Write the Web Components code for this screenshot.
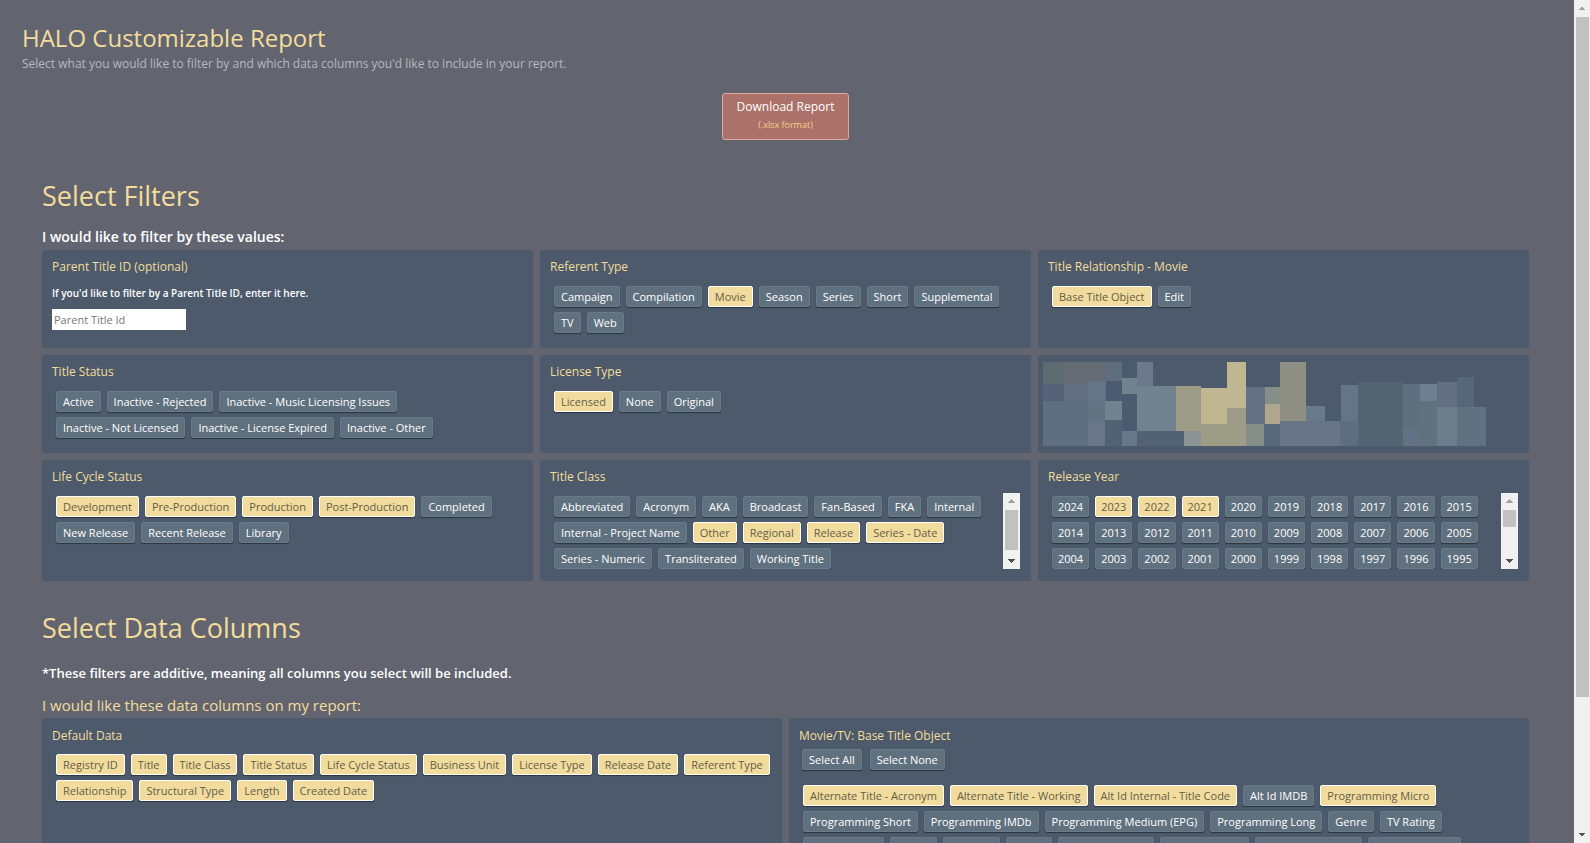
<!DOCTYPE html>
<html lang="en">
<head>
<meta charset="utf-8">
<meta name="viewport" content="width=device-width, initial-scale=1">
<title>HALO Customizable Report</title>
<style>
  html, body { margin: 0; height: 100%; }
  body {
    --page: #626570;
    --panel: #4c5a6c;
    --accent: #f4dd9b;
    --chip: #5f707e;
    background: var(--page);
    color: #fff;
    font-family: "Open Sans", "Noto Sans", sans-serif;
    font-size: 12px;
  }
</style>
</head>
<body>
<report-shell>
  <report-header heading="HALO Customizable Report">
    Select what you would like to filter by and which data columns you'd like to include in your report.
  </report-header>

  <report-section heading="Select Filters" columns="3">
    <span slot="lead">I would like to filter by these values:</span>
    <option-panel heading="Parent Title ID (optional)"><parent-title-field></parent-title-field></option-panel>
    <option-panel heading="Referent Type">
      <chip-group label="Referent Type" items="Campaign|Compilation|*Movie|Season|Series|Short|Supplemental|TV|Web"></chip-group>
    </option-panel>
    <option-panel heading="Title Relationship - Movie">
      <chip-group label="Title Relationship" items="*Base Title Object|Edit"></chip-group>
    </option-panel>
    <option-panel heading="Title Status">
      <chip-group label="Title Status" items="Active|Inactive - Rejected|Inactive - Music Licensing Issues|Inactive - Not Licensed|Inactive - License Expired|Inactive - Other"></chip-group>
    </option-panel>
    <option-panel heading="License Type">
      <chip-group label="License Type" items="*Licensed|None|Original"></chip-group>
    </option-panel>
    <mosaic-panel></mosaic-panel>
    <option-panel heading="Life Cycle Status">
      <chip-group label="Life Cycle Status" items="*Development|*Pre-Production|*Production|*Post-Production|Completed|New Release|Recent Release|Library"></chip-group>
    </option-panel>
    <option-panel heading="Title Class">
      <chip-group scroll="40" label="Title Class" items="Abbreviated|Acronym|AKA|Broadcast|Fan-Based|FKA|Internal|Internal - Project Name|*Other|*Regional|*Release|*Series - Date|Series - Numeric|Transliterated|Working Title"></chip-group>
    </option-panel>
    <option-panel heading="Release Year">
      <chip-group scroll="17" compact label="Release Year" items="2024|*2023|*2022|*2021|2020|2019|2018|2017|2016|2015|2014|2013|2012|2011|2010|2009|2008|2007|2006|2005|2004|2003|2002|2001|2000|1999|1998|1997|1996|1995"></chip-group>
    </option-panel>
  </report-section>

  <report-section heading="Select Data Columns" columns="2">
    <span slot="note">*These filters are additive, meaning all columns you select will be included.</span>
    <span slot="lead">I would like these data columns on my report:</span>
    <option-panel heading="Default Data">
      <chip-group label="Default Data" items="*Registry ID|*Title|*Title Class|*Title Status|*Life Cycle Status|*Business Unit|*License Type|*Release Date|*Referent Type|*Relationship|*Structural Type|*Length|*Created Date"></chip-group>
    </option-panel>
    <option-panel heading="Movie/TV: Base Title Object">
      <bulk-actions slot="actions"></bulk-actions>
      <chip-group label="Base Title Object" items="*Alternate Title - Acronym|*Alternate Title - Working|*Alt Id Internal - Title Code|Alt Id IMDB|*Programming Micro|Programming Short|Programming IMDb|Programming Medium (EPG)|Programming Long|Genre|TV Rating|Release Type|Studio|Network|Brand|Production Year|Origin Country|Original Language|Release Format"></chip-group>
    </option-panel>
  </report-section>
</report-shell>

<script>
const define = (name, html, setup) => {
  const template = document.createElement("template");
  template.innerHTML = html;
  customElements.define(name, class extends HTMLElement {
    connectedCallback() {
      if (this.shadowRoot) return;
      const root = this.attachShadow({ mode: "open" });
      root.append(template.content.cloneNode(true));
      if (setup) setup(this, root);
    }
  });
};

/* Scrollbar column: arrows at both ends, thumb height as a length or share. */
define("scroll-rail", `
  <style>
    :host { display: flex; flex-direction: column; background: #f1f1f1; }
    svg { flex: none; display: block; width: 100%; height: 17px; }
    .track { flex: 1; min-height: 0; }
    .thumb { width: 13px; margin: 0 auto; height: var(--thumb); background: #c1c1c1; }
  </style>
  <svg viewBox="0 0 17 17" shape-rendering="crispEdges"><path d="M8 6h1v1h1v1h1v1h1v1H5V9h1V8h1V7h1z" fill="#a3a3a3"/></svg>
  <div class="track"><div class="thumb"></div></div>
  <svg viewBox="0 0 17 17" shape-rendering="crispEdges"><path d="M5 7h7v1h-1v1h-1v1H9v1H8v-1H7V9H6V8H5z" fill="#505050"/></svg>`);

define("report-shell", `
  <style>
    :host { display: grid; grid-template-columns: minmax(0, 1fr) 16px; height: 100vh; }
    main { overflow-y: auto; scrollbar-width: none; padding: 21px 25px 40px 22px; }
    scroll-rail { --thumb: 84%; }
  </style>
  <main><slot></slot></main>
  <scroll-rail aria-hidden="true"></scroll-rail>`);

define("report-header", `
  <style>
    :host { display: block; }
    h1 { margin: 0; font-size: 24px; line-height: 34px; font-weight: 400; color: var(--accent); }
    p { margin: 0 0 20px; font-size: 12px; line-height: 18px; color: #b6b8bd; }
    button {
      display: block; margin: 0 auto; padding: 4px 14px 5px;
      border: 1px solid #d8aaa3; border-radius: 3px; background: #ac7168;
      font: 500 12px/18px "Open Sans", sans-serif; color: #fff; text-align: center;
    }
    small { display: block; font-size: 9px; font-weight: 400; color: #f3d28c; }
  </style>
  <h1></h1>
  <p><slot></slot></p>
  <button type="button">Download Report<small>(.xlsx format)</small></button>`,
  (host, root) => { root.querySelector("h1").textContent = host.getAttribute("heading"); });

define("report-section", `
  <style>
    :host { display: block; margin: 36px 0 0; padding: 0 20px; }
    :host(:last-of-type) { margin-top: 27px; --panel-top: 9px; --title-gap: 6px; }
    h2 { margin: 0; font-size: 27px; line-height: 40px; font-weight: 400; color: var(--accent); }
    p { margin: 10px 0 2px; font-size: 14px; line-height: 22px; font-weight: 600; }
    .note { margin: 14px 0 0; font-size: 13px; }
    .note + p { font-size: 15px; font-weight: 400; color: var(--accent); }
    .grid { display: grid; gap: 7px; }
  </style>
  <h2></h2>
  <p class="note"><slot name="note"></slot></p>
  <p><slot name="lead"></slot></p>
  <div class="grid"><slot></slot></div>`,
  (host, root) => {
    root.querySelector("h2").textContent = host.getAttribute("heading");
    root.querySelector(".grid").style.gridTemplateColumns =
      "repeat(" + host.getAttribute("columns") + ", minmax(0, 1fr))";
    if (!host.querySelector("[slot=note]")) root.querySelector(".note").remove();
  });

define("option-panel", `
  <style>
    :host {
      display: block; box-sizing: border-box; min-height: 98px;
      padding: var(--panel-top, 8px) 11px 12px 10px; border-radius: 3px; background: var(--panel);
    }
    h3 { margin: 0 0 var(--title-gap, 7px); font-size: 12px; line-height: 18px; font-weight: 400; color: var(--accent); }
    .tight { margin-bottom: 4px; }
  </style>
  <h3></h3>
  <slot name="actions"></slot>
  <slot></slot>`,
  (host, root) => {
    const title = root.querySelector("h3");
    title.textContent = host.getAttribute("heading");
    title.classList.toggle("tight", !!host.querySelector("[slot=actions]"));
  });

define("toggle-chip", `
  <style>
    :host { display: block; }
    button {
      display: block; height: 21px; margin: 0; padding: 0 var(--chip-pad, 6px);
      border: 1px solid #697986; border-radius: 2px; background: var(--chip);
      box-shadow: 0 1px 1px #2b333d;
      font: 500 11px/18px "Open Sans", sans-serif; color: #fff; white-space: nowrap;
    }
    button[aria-pressed="true"] { background: #f1dc9d; border-color: #fff; color: #645c4a; }
  </style>
  <button type="button" aria-pressed="false"><slot></slot></button>`,
  (host, root) => {
    const button = root.querySelector("button");
    button.setAttribute("aria-pressed", host.hasAttribute("selected"));
    button.addEventListener("click", () =>
      button.setAttribute("aria-pressed", button.getAttribute("aria-pressed") !== "true"));
  });

define("chip-group", `
  <style>
    :host { display: block; }
    :host([compact]) { --chip-pad: 5px; }
    :host([scroll]) { display: grid; grid-template-columns: minmax(0, 1fr) 17px; height: 76px; }
    .chips { display: flex; flex-wrap: wrap; align-content: flex-start; gap: 5px 6px; padding: 3px 0 0 4px; }
    :host([scroll]) .chips { overflow-y: auto; scrollbar-width: none; }
  </style>
  <div class="chips" role="group"></div>`,
  (host, root) => {
    const chips = root.querySelector(".chips");
    chips.setAttribute("aria-label", host.getAttribute("label"));
    for (const item of host.getAttribute("items").split("|")) {
      const chip = document.createElement("toggle-chip");
      chip.toggleAttribute("selected", item.startsWith("*"));
      chip.textContent = item.replace(/^\*/, "");
      chips.append(chip);
    }
    if (host.hasAttribute("scroll")) {
      const rail = document.createElement("scroll-rail");
      rail.setAttribute("aria-hidden", "true");
      rail.style.setProperty("--thumb", host.getAttribute("scroll") + "px");
      root.append(rail);
    }
  });

define("bulk-actions", `
  <style>
    :host { display: flex; gap: 8px; padding-left: 3px; margin-bottom: 12px; }
  </style>
  <toggle-chip>Select All</toggle-chip>
  <toggle-chip>Select None</toggle-chip>`);

define("parent-title-field", `
  <style>
    :host { display: block; padding-top: 2px; }
    label { display: block; margin-bottom: 8px; font-size: 10px; line-height: 16px; font-weight: 600; }
    input {
      display: block; box-sizing: border-box; width: 134px; height: 21px; padding: 0 2px;
      border: 0; background: #fff; font: 400 11px "Open Sans", sans-serif; color: #333;
    }
    input::placeholder { color: #777; }
  </style>
  <label for="parent">If you'd like to filter by a Parent Title ID, enter it here.</label>
  <input id="parent" type="text" placeholder="Parent Title Id">`);

/* Panel filled with a patchwork of flat tiles: x, y, width, height, colour. */
const tiles = [
  [39,36,63,66,"#5e6a72"],[102,36,126,66,"#656c73"],[228,36,48,57,"#5d6e7e"],
  [39,102,63,51,"#54627a"],[102,102,72,51,"#626f82"],[174,93,54,60,"#637586"],
  [228,93,48,60,"#4d5b70"],[276,36,45,48,"#4b5a6f"],[321,36,48,72,"#6c798a"],
  [276,84,45,48,"#73828f"],[276,132,45,111,"#4d5b70"],[39,153,135,135,"#5e7080"],
  [174,153,51,57,"#627381"],[225,153,51,57,"#72828f"],[174,210,51,78,"#697689"],
  [225,210,51,78,"#526273"],[276,243,45,45,"#667989"],[321,108,117,135,"#72828f"],
  [321,243,141,45,"#526273"],[438,108,75,135,"#9c9c87"],[462,243,51,45,"#8b9492"],
  [513,114,78,108,"#c0b691"],[591,36,57,138,"#c0b691"],[591,174,57,48,"#9c9c87"],
  [513,222,135,66,"#9c9c87"],[648,111,57,111,"#647184"],[648,222,54,66,"#868e88"],
  [705,111,45,51,"#868e88"],[705,162,45,60,"#afa88c"],[702,222,48,66,"#566879"],
  [750,36,78,177,"#8f8f83"],[828,168,57,45,"#687b8b"],[885,168,48,45,"#4b5a6f"],
  [750,213,180,75,"#687488"],[933,105,51,108,"#647686"],[930,213,54,75,"#5d6f7e"],
  [984,96,135,192,"#536473"],[1119,102,51,132,"#5e7080"],[1119,234,45,54,"#647184"],
  [1164,234,57,54,"#61727f"],[1170,153,51,81,"#61727f"],[1170,102,51,51,"#6f7f8d"],
  [1221,96,60,75,"#647082"],[1281,81,51,90,"#566778"],[1221,171,60,117,"#6e7d8b"],
  [1281,171,87,117,"#607180"]
];
define("mosaic-panel", `
  <style>
    :host { display: block; padding: 7px 5px; border-radius: 3px; background: var(--panel); }
    svg { display: block; width: 443px; max-width: 100%; height: 84px; }
  </style>
  <svg viewBox="39 36 1329 252" preserveAspectRatio="none" shape-rendering="crispEdges" aria-hidden="true">` +
  tiles.map(([x, y, w, h, c]) => `<rect x="${x}" y="${y}" width="${w}" height="${h}" fill="${c}"/>`).join("") +
  `</svg>`);
</script>
</body>
</html>
